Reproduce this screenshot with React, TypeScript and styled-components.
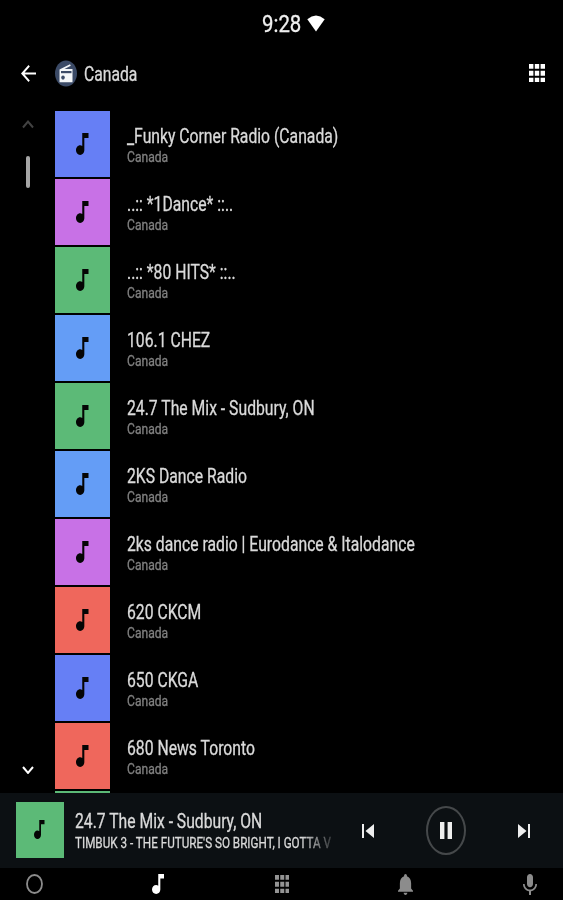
import React from "react";
import styled, { createGlobalStyle } from "styled-components";

const Global = createGlobalStyle`
  *, *::before, *::after { box-sizing: border-box; }
  html, body { margin: 0; padding: 0; background: #000; }
  body { font-family: Roboto, "Liberation Sans", sans-serif; color: #dedede; overflow: hidden; }
  svg { display: block; flex: none; }
`;

const Screen = styled.div`
  width: 563px;
  height: 900px;
  display: flex;
  flex-direction: column;
  background: #000;
  overflow: hidden;
`;

const StatusBar = styled.div`
  height: 48px;
  padding: 0 0 1px 262px;
  display: flex;
  align-items: center;
`;

const Header = styled.header`
  height: 50px;
  padding: 0 18px 0 20.5px;
  display: flex;
  align-items: center;
`;

const HeaderTitle = styled.div`
  flex: 1;
  margin-left: 7.5px;
  padding-top: 1px;
`;

const Condensed = styled.span<{ $size: number; $sx: number; $color?: string; $line: number }>`
  display: block;
  width: max-content;
  white-space: pre;
  font-size: ${(p) => p.$size}px;
  line-height: ${(p) => p.$line}px;
  color: ${(p) => p.$color ?? "#dadada"};
  -webkit-text-stroke: 0.3px currentColor;
  transform: scaleX(${(p) => p.$sx});
  transform-origin: 0 50%;
`;

const TimeSlot = styled.div`
  width: 45px;
`;

const Main = styled.main`
  height: 695px;
  padding-top: 13px;
  display: flex;
  overflow: hidden;
`;

const ScrollRail = styled.div`
  width: 55px;
  padding: 9px 0 19px;
  display: flex;
  flex-direction: column;
  align-items: center;
`;

const Thumb = styled.div`
  width: 4px;
  height: 32px;
  margin: 27px 0 auto;
  border-radius: 2px;
  background: #a6a6a6;
`;

const List = styled.div`
  flex: 1;
  display: flex;
  flex-direction: column;
  gap: 2px;
`;

const Row = styled.div`
  height: 66px;
  flex: none;
  display: flex;
`;

const Tile = styled.div<{ $bg: string; $w: number; $h: number }>`
  width: ${(p) => p.$w}px;
  height: ${(p) => p.$h}px;
  flex: none;
  display: flex;
  align-items: center;
  justify-content: center;
  padding-bottom: 1px;
  background: ${(p) => p.$bg};
`;

const RowText = styled.div`
  padding: 14px 0 0 17.5px;
`;

const Player = styled.section`
  height: 75px;
  flex: none;
  padding: 0 0 1px 15.5px;
  display: flex;
  align-items: center;
  background: #0c1013;
`;

const TrackText = styled.div`
  width: 257px;
  margin-left: 11.5px;
  height: 56px;
  padding-top: 8px;
`;

const Fade = styled.div`
  width: 257px;
  mask-image: linear-gradient(to right, #000 88%, transparent 103%);
`;

const Controls = styled.div`
  flex: 1;
  padding: 1px 33px 0 30px;
  display: flex;
  align-items: center;
  justify-content: space-between;
`;

const PauseRing = styled.div`
  width: 40px;
  height: 49px;
  border: 2px solid #45484a;
  border-radius: 50%;
  display: flex;
  align-items: center;
  justify-content: center;
`;

const NavBar = styled.nav`
  height: 32px;
  padding: 0 24.5px 0 25px;
  display: flex;
  align-items: center;
  justify-content: space-between;
`;

const NavItem = styled.div`
  width: 18px;
  display: flex;
  justify-content: center;
`;

const Note = ({ w, h, color = "#050505" }: { w: number; h: number; color?: string }) => (
  <svg width={w} height={h} viewBox="6 3 12 18" preserveAspectRatio="none">
    <path
      fill={color}
      d="M12 3v10.55c-.59-.34-1.27-.55-2-.55-2.21 0-4 1.79-4 4s1.79 4 4 4 4-1.79 4-4V7h4V3h-6z"
    />
  </svg>
);

const AppsGrid = ({ w, h, color }: { w: number; h: number; color: string }) => (
  <svg width={w} height={h} viewBox="4 4 16 16" preserveAspectRatio="none">
    <path
      fill={color}
      d="M4 8.2h4.4V4H4v4.2zm5.8 11.8h4.4v-4.2H9.8V20zM4 20h4.4v-4.2H4V20zm0-5.9h4.4V9.9H4v4.2zm5.8 0h4.4V9.9H9.8v4.2zM15.6 4v4.2H20V4h-4.4zM9.8 8.2h4.4V4H9.8v4.2zm5.8 5.9H20V9.9h-4.4v4.2zm0 5.9H20v-4.2h-4.4V20z"
    />
  </svg>
);

const Chevron = ({ up, color }: { up?: boolean; color: string }) => (
  <svg width="12" height="8.5" viewBox="0 0 12 8.5">
    <path d={up ? "M1 7.5 6 1.6l5 5.9" : "M1 1l5 5.9L11 1"} fill="none" stroke={color} strokeWidth="2" />
  </svg>
);

const BLUE = "#667ff5";
const PURPLE = "#c871e6";
const GREEN = "#5cba77";
const SKY = "#649df6";
const RED = "#ef675c";

const stations = [
  { name: "_Funky Corner Radio (Canada)", color: BLUE },
  { name: "..:: *1Dance* ::..", color: PURPLE },
  { name: "..:: *80 HITS* ::..", color: GREEN },
  { name: "106.1 CHEZ", color: SKY },
  { name: "24.7 The Mix - Sudbury, ON", color: GREEN },
  { name: "2KS Dance Radio", color: SKY },
  { name: "2ks dance radio | Eurodance & Italodance", color: PURPLE },
  { name: "620 CKCM", color: RED },
  { name: "650 CKGA", color: BLUE },
  { name: "680 News Toronto", color: RED },
];

export default function App() {
  return (
    <>
      <Global />
      <Screen>
        <StatusBar>
          <TimeSlot>
            <Condensed $size={24} $sx={0.85} $line={28} $color="#f0f0f0">9:28</Condensed>
          </TimeSlot>
          <svg width="18" height="17" viewBox="0 0 18 17">
            <path d="M.3 4.2Q9-3.2 17.7 4.2L9 16.6z" fill="#fff" />
          </svg>
        </StatusBar>
        <Header>
          <svg width="15" height="17" viewBox="4 4 16 16" preserveAspectRatio="none">
            <path fill="#fff" d="M20 11H7.83l5.59-5.59L12 4l-8 8 8 8 1.41-1.41L7.83 13H20v-2z" />
          </svg>
          <svg width="41" height="27" viewBox="0 0 41 27">
            <ellipse cx="30" cy="13.5" rx="11" ry="13" fill="#3b4a66" />
            <path d="M23.5 9.5 34 4.2l.8 1.5-6.3 3.2h8v13.3h-13z" fill="#f4f6f8" />
            <path d="M25 11h10.5v2.2H25z" fill="#3b4a66" />
            <ellipse cx="27" cy="17.6" rx="1.8" ry="2.1" fill="#3b4a66" />
          </svg>
          <HeaderTitle>
            <Condensed $size={20} $sx={0.785} $line={24}>Canada</Condensed>
          </HeaderTitle>
          <AppsGrid w={16} h={18.5} color="#fff" />
        </Header>
        <Main>
          <ScrollRail>
            <Chevron up color="#424242" />
            <Thumb />
            <Chevron color="#fff" />
          </ScrollRail>
          <List>
            {stations.map((s) => (
              <Row key={s.name}>
                <Tile $bg={s.color} $w={54.5} $h={66}>
                  <Note w={12.5} h={22} />
                </Tile>
                <RowText>
                  <Condensed $size={19.5} $sx={0.807} $line={24}>{s.name}</Condensed>
                  <Condensed $size={14} $sx={0.865} $line={16} $color="#808080">Canada</Condensed>
                </RowText>
              </Row>
            ))}
            <Row>
              <Tile $bg={GREEN} $w={54.5} $h={66} />
            </Row>
          </List>
        </Main>
        <Player>
          <Tile $bg={GREEN} $w={48} $h={56}>
            <Note w={10.5} h={19} />
          </Tile>
          <TrackText>
            <Condensed $size={19.5} $sx={0.805} $line={24}>24.7 The Mix - Sudbury, ON</Condensed>
            <Fade>
              <Condensed $size={14.5} $sx={0.806} $line={20}>TIMBUK 3 - THE FUTURE'S SO BRIGHT, I GOTTA V</Condensed>
            </Fade>
          </TrackText>
          <Controls>
            <svg width="12" height="14" viewBox="6 6 12 12" preserveAspectRatio="none">
              <path fill="#eee" d="M6 6h2v12H6zm3.5 6l8.5 6V6z" />
            </svg>
            <PauseRing>
              <svg width="12" height="17" viewBox="0 0 12 17">
                <path fill="#eee" d="M0 0h4.4v17H0zM7.6 0H12v17H7.6z" />
              </svg>
            </PauseRing>
            <svg width="12" height="14" viewBox="6 6 12 12" preserveAspectRatio="none">
              <path fill="#eee" d="M6 18l8.5-6L6 6v12zM16 6v12h2V6h-2z" />
            </svg>
          </Controls>
        </Player>
        <NavBar>
          <NavItem>
            <svg width="17" height="20" viewBox="0 0 17 20">
              <ellipse cx="8.5" cy="10" rx="7.5" ry="9" fill="none" stroke="#8c8c8c" strokeWidth="1.8" />
            </svg>
          </NavItem>
          <NavItem><Note w={12.5} h={20} color="#fff" /></NavItem>
          <NavItem><AppsGrid w={14.5} h={18.5} color="#949494" /></NavItem>
          <NavItem>
            <svg width="15" height="21" viewBox="4 2.5 16 19.5" preserveAspectRatio="none">
              <path fill="#8c8c8c" d="M12 22c1.1 0 2-.9 2-2h-4c0 1.1.89 2 2 2zm6-6v-5c0-3.07-1.64-5.64-4.5-6.32V4c0-.83-.67-1.5-1.5-1.5s-1.5.67-1.5 1.5v.68C7.63 5.36 6 7.92 6 11v5l-2 2v1h16v-1l-2-2z" />
            </svg>
          </NavItem>
          <NavItem>
            <svg width="14" height="21" viewBox="5 2 14 19" preserveAspectRatio="none">
              <path fill="#8c8c8c" d="M12 14c1.66 0 2.99-1.34 2.99-3L15 5c0-1.66-1.34-3-3-3S9 3.34 9 5v6c0 1.66 1.34 3 3 3zm5.3-3c0 3-2.54 5.1-5.3 5.1S6.7 14 6.7 11H5c0 3.41 2.72 6.23 6 6.72V21h2v-3.28c3.28-.48 6-3.3 6-6.72h-1.7z" />
            </svg>
          </NavItem>
        </NavBar>
      </Screen>
    </>
  );
}
